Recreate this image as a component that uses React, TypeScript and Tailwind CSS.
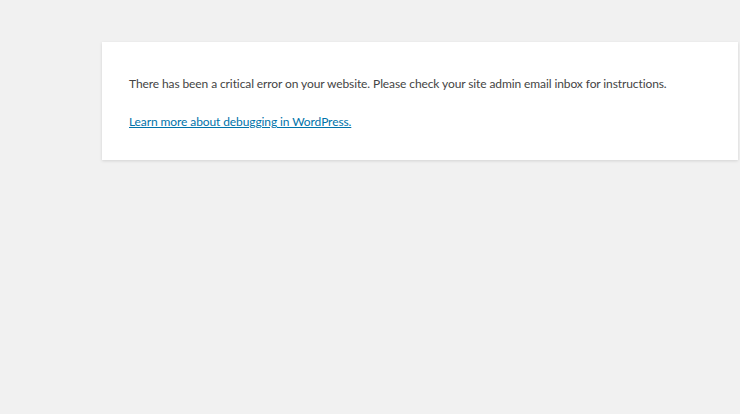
export default function App() {
  return (
    <div className="min-h-screen w-full bg-[#f1f1f1] pt-[42px] font-['Lato',sans-serif] text-[#444]">
      <div className="ml-[102px] h-[118px] w-[636px] bg-white px-[27px] pt-[32px] shadow-[0_1px_3px_rgba(0,0,0,0.13)]">
        <p className="text-[12px] leading-[19px] tracking-[-0.1px] whitespace-nowrap">
          There has been a critical error on your website. Please check your site admin email inbox for instructions.
        </p>
        <p className="mt-[19px] text-[12px] leading-[19px] tracking-[-0.1px]">
          <a href="#" className="text-[#0073aa] underline">
            Learn more about debugging in WordPress.
          </a>
        </p>
      </div>
    </div>
  );
}
